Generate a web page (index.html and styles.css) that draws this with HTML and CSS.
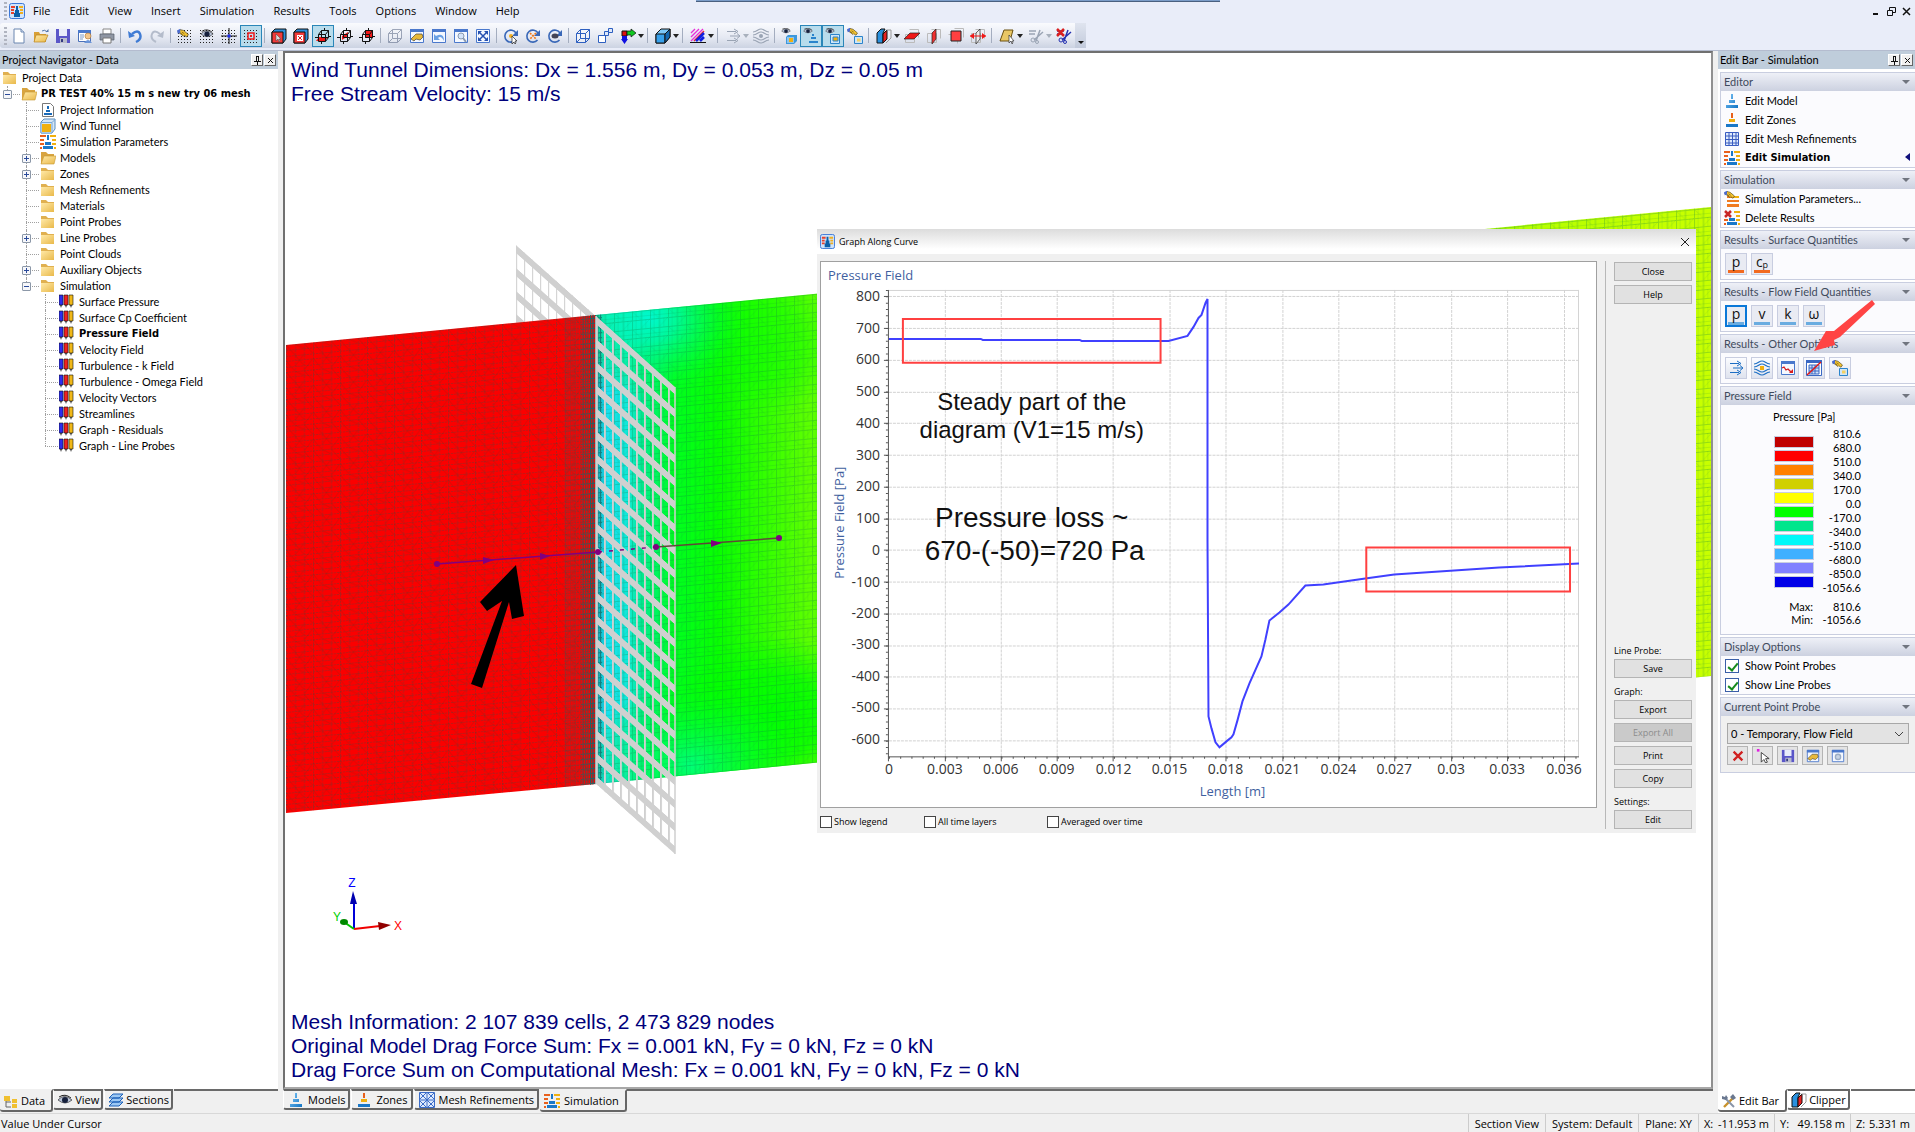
FILE: index.html
```html
<!DOCTYPE html>
<html lang="en">
<head>
<meta charset="utf-8">
<title>Wind Simulation</title>
<link rel="stylesheet" href="styles.css">
</head>
<body>
<svg class="defs" aria-hidden="true">
  <defs>
    <linearGradient id="gFold" x1="0" y1="0" x2="1" y2="1"><stop offset="0" stop-color="#ffe9a8"/><stop offset="1" stop-color="#e9b94a"/></linearGradient>
    <linearGradient id="gBlue" x1="0" y1="0" x2="1" y2="1"><stop offset="0" stop-color="#7cc4f5"/><stop offset="1" stop-color="#1274c4"/></linearGradient>
  </defs>
  <symbol id="app" viewBox="0 0 16 16"><rect x=".5" y=".5" width="15" height="15" rx="2" fill="#cfe3fb" stroke="#3b78d8"/><path d="M2 3h4v2H2zm0 3h3v2H2zm0 3h3v2H2z" fill="#e8402a"/><path d="M10 3h4v2h-4zm1 3h3v2h-3zm0 3h3v2h-3z" fill="#f0b020"/><path d="M7 3h2v4h1v3h1v4H5v-4h1V7h1z" fill="#0a5ea8"/></symbol>
  <symbol id="new" viewBox="0 0 16 16"><path d="M3 1h7l3 3v11H3z" fill="#fff" stroke="#6a86b0"/><path d="M10 1v3h3" fill="#dce6f5" stroke="#6a86b0"/></symbol>
  <symbol id="open" viewBox="0 0 16 16"><path d="M1 4h5l1 2h6v8H1z" fill="#d9a036"/><path d="M3 7h12l-3 7H1z" fill="url(#gFold)" stroke="#b98420" stroke-width=".7"/><path d="M9 3q3-2 5 1" fill="none" stroke="#5577aa"/><path d="M12.500 4h3v-3z" fill="#5577aa"/></symbol>
  <symbol id="save" viewBox="0 0 16 16"><path d="M1 1h14v14H1z" fill="#5a56c8"/><path d="M4 1h8v7H4z" fill="#e8ecfa"/><path d="M5 10h7v5H5z" fill="#b9bccc"/><path d="M6 11h2v3H6z" fill="#333a80"/></symbol>
  <symbol id="props" viewBox="0 0 16 16"><path d="M1.500 2.500h12v11h-12z" fill="#fff" stroke="#4a70b8"/><path d="M1 2h13v3H1z" fill="#4a78cc"/><path d="M3 7h4M3 9h4M3 11h3" stroke="#7a9ac8"/><circle cx="11" cy="8" r="3" fill="#f3c78c" stroke="#a86b2c" stroke-width=".6"/><path d="M7 15q4-6 8 0z" fill="#6a94d8"/></symbol>
  <symbol id="print" viewBox="0 0 16 16"><path d="M4 1h8v5H4z" fill="#fff" stroke="#888"/><path d="M1 6h14v6H1z" fill="#8f96a3" stroke="#555c68" stroke-width=".7"/><path d="M4 10h8v5H4z" fill="#fff" stroke="#777"/></symbol>
  <symbol id="undo" viewBox="0 0 16 16"><path d="M5 6q6-5 8 0t-4 8" fill="none" stroke="#3f7bd4" stroke-width="2.400"/><path d="M1 3l1 7 6-2z" fill="#3f7bd4"/></symbol>
  <symbol id="redo" viewBox="0 0 16 16"><path d="M11 6q-6-5-8 0t4 8" fill="none" stroke="#b4bccb" stroke-width="2"/><path d="M15 3l-1 7-6-2z" fill="#b4bccb"/></symbol>
  <symbol id="dots" viewBox="0 0 16 16"><path d="M1 2.500h15M1 5.500h15M1 8.500h15M1 11.500h15M1 14.500h15" stroke="#222" stroke-dasharray="1 2"/></symbol>
  <symbol id="hand" viewBox="0 0 16 16"><path d="M1 5l3-3 4 1 6 5-2 3-3-2-1 1-4-3z" fill="#f2c230" stroke="#473a10" stroke-width=".8"/><path d="M4 6l3 2M6 5l3 2" stroke="#473a10" stroke-width=".7"/><path d="M0 3l4-2v5l-3 1z" fill="#4a6bd0"/></symbol>
  <symbol id="eye" viewBox="0 0 16 16"><path d="M1 8q6-7 14 0q-7 6-14 0z" fill="#b9c4d8" stroke="#333" stroke-width=".7"/><circle cx="8" cy="8" r="3" fill="#16203c"/><path d="M2 5q6-4 12 1" fill="none" stroke="#222"/></symbol>
  <symbol id="gridhand" viewBox="0 0 16 16"><use href="#dots"/><use href="#hand" width="13" height="13"/></symbol>
  <symbol id="grideye" viewBox="0 0 16 16"><use href="#dots"/><use href="#eye" x="1" y="-1" width="14" height="14"/></symbol>
  <symbol id="gridcross" viewBox="0 0 16 16"><use href="#dots"/><path d="M8 0v16M0 8h16" stroke="#111"/><path d="M6.500 6.500h3v3h-3z" fill="#1a2cf0"/></symbol>
  <symbol id="gridsq" viewBox="0 0 16 16"><use href="#dots"/><path d="M5 5h6v6H5z" fill="#bfe0f0" stroke="#f01818" stroke-width="1.500"/><path d="M7 7h2v2H7z" fill="#f01818"/></symbol>
  <symbol id="cubesel" viewBox="0 0 16 16"><path d="M1 4l3-3h11v10l-3 4H1z" fill="#2a90dd" stroke="#111"/><path d="M1 4h11v11H1z" fill="#f23a3a" stroke="#111"/><path d="M5 6v7l2-2 1 3 1-1-1-2h2z" fill="#ddd" stroke="#444" stroke-width=".5"/></symbol>
  <symbol id="cubex" viewBox="0 0 16 16"><path d="M1 4l3-3h11v10l-3 4H1z" fill="#2a90dd" stroke="#111"/><path d="M1 4h11v11H1z" fill="#f23a3a" stroke="#111"/><path d="M4 7h6v6H4z" fill="#fff"/><path d="M5 8l4 4M9 8l-4 4" stroke="#d22"/></symbol>
  <symbol id="cubew" viewBox="0 0 16 16"><path d="M3.500 6.500h7v7h-7zM6.500 2.500h7v7h-7zM3.500 6.500l3-4M10.500 6.500l3-4M10.500 13.500l3-4M0 9.500h4M13 8.500h3M9.500 0v3M6.500 13v3" fill="none" stroke="#111"/></symbol>
  <symbol id="cubea" viewBox="0 0 16 16"><path d="M1 13l3-4h9l-3 4z" fill="#f01818"/><use href="#cubew"/></symbol>
  <symbol id="cubeb" viewBox="0 0 16 16"><path d="M5 8l6-4v4l-6 4z" fill="#f01818"/><use href="#cubew"/></symbol>
  <symbol id="cubec" viewBox="0 0 16 16"><path d="M6 2h8v8H6z" fill="#f01818"/><use href="#cubew"/></symbol>
  <symbol id="wire" viewBox="0 0 16 16"><path d="M1.500 5.500h9v9h-9zM5.500 1.500h9v9h-9zM1.500 5.500l4-4M10.500 5.500l4-4M10.500 14.500l4-4M1.500 14.500l4-4" fill="#fff" fill-opacity=".4" stroke="#2d5fc0"/></symbol>
  <symbol id="win" viewBox="0 0 16 16"><path d="M1.500 1.500h13v13h-13z" fill="#f4f8ff" stroke="#4a78cc"/><path d="M1 1h14v3H1z" fill="#4a78cc"/></symbol>
  <symbol id="winhand" viewBox="0 0 16 16"><use href="#win"/><path d="M2 11l5-5h6l1 3-3 3-4-1-2 2z" fill="#e8b93a" stroke="#4a4430" stroke-width=".7"/></symbol>
  <symbol id="winundo" viewBox="0 0 16 16"><use href="#win"/><path d="M3 6v6h6L7 10q3-3 6 3 0-9-8-5z" fill="#6aa0e4"/></symbol>
  <symbol id="winzoom" viewBox="0 0 16 16"><use href="#win"/><circle cx="8" cy="8" r="3" fill="#d5e5fa" stroke="#8a9ab0"/><path d="M10 10l3 4" stroke="#8a9ab0" stroke-width="2"/></symbol>
  <symbol id="winfit" viewBox="0 0 16 16"><path d="M1.500 1.500h13v13h-13z" fill="#f4f8ff" stroke="#4a78cc"/><path d="M4 4l8 8M12 4l-8 8" stroke="#2550b0" stroke-width="1.500"/><path d="M3 3h4L3 7zM13 3v4L9 3zM3 13V9l4 4zM13 13H9l4-4z" fill="#2550b0"/></symbol>
  <symbol id="winred" viewBox="0 0 16 16"><use href="#win"/><path d="M2 8l2-1 2 3 2-1 3 3" fill="none" stroke="#d81c1c" stroke-width="1.300"/><path d="M13 13v-4l-4 4z" fill="#d81c1c"/></symbol>
  <symbol id="wingrid" viewBox="0 0 16 16"><path d="M.500.500h15v15H.500z" fill="#fff" stroke="#3a68c4"/><path d="M0 0h16v3H0z" fill="#3a68c4"/><path d="M3 5h10v9H3zM6 5v9M9 5v9M3 8h10M3 11h10" fill="#cfe0f8" stroke="#3a68c4"/><path d="M1 15L15 2" stroke="#e01818" stroke-width="1.500"/></symbol>
  <symbol id="wingear" viewBox="0 0 16 16"><use href="#win"/><circle cx="8" cy="9" r="3" fill="#c8d4e4" stroke="#9aacc4" stroke-width="1.500"/></symbol>
  <symbol id="rot" viewBox="0 0 16 16"><path d="M12.500 12A6 6 0 1 1 13 5" fill="none" stroke="#3a68b8" stroke-width="1.600"/><path d="M15 2v6H9z" fill="#3a68b8"/></symbol>
  <symbol id="rotsel" viewBox="0 0 16 16"><use href="#rot"/><circle cx="8" cy="8" r="2" fill="#f4b020"/><path d="M9 8v8l2-2 1 2 1-1-1-2h2z" fill="#fff" stroke="#222" stroke-width=".7"/></symbol>
  <symbol id="rotx" viewBox="0 0 16 16"><use href="#rot"/><path d="M5 5l6 6M11 5l-6 6" stroke="#f07818" stroke-width="1.600" stroke-dasharray="2 1"/></symbol>
  <symbol id="roteye" viewBox="0 0 16 16"><use href="#rot"/><ellipse cx="8" cy="8" rx="3.500" ry="2.500" fill="#445"/></symbol>
  <symbol id="multi" viewBox="0 0 16 16"><path d="M1.500 7.500h7v7h-7z" fill="#fff" stroke="#2d5fc0"/><path d="M7.500 3.500h4v4h-4zM11.500.500h4v4h-4z" fill="#dfe9fa" stroke="#2d5fc0"/></symbol>
  <symbol id="rgb" viewBox="0 0 16 16"><path d="M2 3h5v5H2z" fill="#e01010" stroke="#111"/><path d="M7 3h4V1l5 4-5 4V7H7z" fill="#10c820" stroke="#111" stroke-width=".7"/><path d="M2 8h5v3h1l-3.500 5L1 11h1z" fill="#1010e0"/></symbol>
  <symbol id="cube" viewBox="0 0 16 16"><path d="M1 6l5-5h9v8l-5 6H1z" fill="#7cc8f8" stroke="#111"/><path d="M1 6h9v9H1z" fill="#38a0ea" stroke="#111"/><path d="M10 6l5-5v8l-5 6z" fill="#1468b0" stroke="#111"/></symbol>
  <symbol id="hatch" viewBox="0 0 16 16"><path d="M1 5l4-4M1 9l8-8M1 13L13 1" stroke="#e830d8" stroke-width="1.300"/><path d="M4 13L14 3" stroke="#f02030" stroke-width="1.500"/><path d="M6 13l8-8M10 13l4-4" stroke="#1020e0" stroke-width="2.500"/><path d="M0 14.500h16" stroke="#111"/></symbol>
  <symbol id="arrows" viewBox="0 0 16 16"><path d="M2 3.500h9M5 8h9M2 12.500h9" stroke="currentColor" stroke-width="1.200"/><path d="M9 1l4 2.500L9 6M12 5.500L15 8l-3 2.500M9 10l4 2.500L9 15" fill="none" stroke="currentColor"/></symbol>
  <symbol id="stream" viewBox="0 0 16 16"><path d="M0 4C4 4 5 1 8 1s4 3 8 3M0 7C4 7 5 4 8 4s4 3 8 3M0 9c4 0 5 3 8 3s4-3 8-3M0 12c4 0 5 3 8 3s4-3 8-3" fill="none" stroke="currentColor" stroke-width="1.200"/><circle cx="8" cy="8" r="2" fill="currentColor"/></symbol>
  <symbol id="streamc" viewBox="0 0 16 16"><use href="#stream"/><path d="M6 6h4v4H6z" fill="#f0b010"/></symbol>
  <symbol id="eyesq" viewBox="0 0 16 16"><use href="#eye" width="10" height="10" x="0" y="-2"/><path d="M5 9l2-2h9v6l-3 3H5z" fill="#3c98dc"/><path d="M6 9h7v6H6z" fill="#8fc4ee"/><path d="M8 10h4v4H8z" fill="#f0b010"/></symbol>
  <symbol id="eyetow" viewBox="0 0 16 16"><use href="#eye" width="10" height="10" x="0" y="-2"/><path d="M9 6h2v2H9zM8 9h5v2H8zM6 13h9v2H6z" fill="#2a84cc"/></symbol>
  <symbol id="eyebox" viewBox="0 0 16 16"><use href="#eye" width="10" height="10" x="0" y="-2"/><path d="M5.500 6.500h9v9h-9z" fill="#cfe6f7" stroke="#2a84cc"/><path d="M8 9h5v4H8z" fill="#f0b010" stroke="#2a84cc"/></symbol>
  <symbol id="handbox" viewBox="0 0 16 16"><use href="#hand" width="12" height="12" y="-1"/><path d="M7.500 8.500h8v7h-8z" fill="#cfe6f7" stroke="#2a84cc"/><path d="M10 10.500h3.500v3H10z" fill="#f4d060"/></symbol>
  <symbol id="clip" viewBox="0 0 16 16"><path d="M1 5l4-4h4L7 5v10H1z" fill="#2a90dd" stroke="#111"/><path d="M7 6l4-4v9l-4 4z" fill="#e82020" stroke="#111"/><path d="M10.500 2h4.500v8l-5 5" fill="none" stroke="#999"/></symbol>
  <symbol id="plane1" viewBox="0 0 16 16"><path d="M1.500 6.500h9v8h-9zM5.500 1.500h9v8" fill="none" stroke="#bbb"/><path d="M0 11l6-6h10l-6 6z" fill="#f01818" stroke="#222" stroke-width=".7"/></symbol>
  <symbol id="plane2" viewBox="0 0 16 16"><path d="M1.500 5.500h9v9h-9zM5.500 1.500h9v9" fill="none" stroke="#bbb"/><path d="M6 5l4-4v10l-4 5z" fill="#f03030" stroke="#222" stroke-width=".7"/></symbol>
  <symbol id="plane3" viewBox="0 0 16 16"><path d="M.500 6.500h9v9M6.500.500h9v9" fill="none" stroke="#bbb"/><path d="M3 3h10v10H3z" fill="#ff4040" stroke="#222"/></symbol>
  <symbol id="plane4" viewBox="0 0 16 16"><path d="M1.500 5.500h9v9h-9zM5.500 1.500h9v9" fill="none" stroke="#bbb"/><path d="M6 5l4-4v10l-4 5z" fill="#eee" stroke="#222" stroke-width=".7"/><path d="M0 8h16" stroke="#f01818"/><path d="M0 8l4-3v6zM16 8l-4-3v6z" fill="#f01818"/></symbol>
  <symbol id="slab" viewBox="0 0 16 16"><path d="M1 13L5 2h9l-3 11z" fill="#e9c765" stroke="#6a5010"/><path d="M10 7v8l2-2 1 3 1-1-1-2h2z" fill="#fff" stroke="#333" stroke-width=".7"/></symbol>
  <symbol id="cut" viewBox="0 0 16 16"><path d="M1 3h7M1 6h6" stroke="currentColor" stroke-width="1.500"/><path d="M15 4L6 12M12 2l-4 11" stroke="currentColor" stroke-width="1.500"/><circle cx="5" cy="12" r="2" fill="none" stroke="currentColor"/><circle cx="9" cy="14" r="1.500" fill="none" stroke="currentColor"/></symbol>
  <symbol id="cutx" viewBox="0 0 16 16"><g color="#2430b0"><use href="#cut"/></g><path d="M1 1l7 7M8 1L1 8" stroke="#d82020" stroke-width="2.500"/></symbol>
  <symbol id="folder" viewBox="0 0 16 16"><path d="M1 2h5l2 2h6v10H1z" fill="#e0b050"/><path d="M1 5h13v9H1z" fill="url(#gFold)"/></symbol>
  <symbol id="folderop" viewBox="0 0 16 16"><path d="M1 2h5l2 2h6v10H1z" fill="#d8a440"/><path d="M4 6h12l-2 8H1z" fill="url(#gFold)" stroke="#c89830" stroke-width=".6"/></symbol>
  <symbol id="info" viewBox="0 0 16 16"><path d="M2.500 1.500h8l3 3v10h-11z" fill="#fff" stroke="#777"/><path d="M7 4h2v3H7zM6 8h4v2H6zM4 11h8v2H4z" fill="#1a6ab8"/></symbol>
  <symbol id="tunnel" viewBox="0 0 16 16"><path d="M1 4l3-3h11v10l-3 4H1z" fill="#d5e7f7" stroke="#5a8ec0"/><path d="M1 4.500h11V15H1zM12 4.500l3-3" fill="#d5e7f7" stroke="#7aa8d4"/><path d="M2 6h9v8H2z" fill="#f0b010"/></symbol>
  <symbol id="sim" viewBox="0 0 16 16"><path d="M0 1h6v2H0zM0 5h4v2H0zM0 9h4v2H0zM0 13h2v2H0z" fill="#e8601c"/><path d="M10 1h6v2h-6zM12 5h4v2h-4zM12 9h4v2h-4zM14 13h2v2h-2z" fill="#f0b010"/><path d="M7 1h2v5H7zM5 8h6v3H5zM3 12h10v3H3z" fill="#1a78c8"/></symbol>
  <symbol id="pens" viewBox="0 0 16 16"><path d="M0 1h4v10H0z" fill="#2c2cf0" stroke="#111" stroke-width=".6"/><path d="M5 1h4v10H5z" fill="#f02020" stroke="#111" stroke-width=".6"/><path d="M10 1h4v10h-4z" fill="#f0b818" stroke="#111" stroke-width=".6"/><path d="M1 11h2l-1 3zM6 11h2l-1 3zM11 11h2l-1 3z" fill="#333"/></symbol>
  <symbol id="tower" viewBox="0 0 16 16"><path d="M7 1h2v5H7zM5 7h6v3H5zM2 12h12v3H2z" fill="url(#gBlue)"/></symbol>
  <symbol id="towerz" viewBox="0 0 16 16"><path d="M7 1h2v5H7z" fill="#e8601c"/><path d="M5 7h6v3H5z" fill="#f0b010"/><path d="M2 12h12v3H2z" fill="#1a78c8"/></symbol>
  <symbol id="mesh" viewBox="0 0 16 16"><path d="M1.500 1.500h13v13h-13zM5 1v14M8.500 1v14M12 1v14M1 5h14M1 8.500h14M1 12h14" fill="#dfeafc" stroke="#3a5cc0"/></symbol>
  <symbol id="meshx" viewBox="0 0 16 16"><path d="M.500.500h15v15H.500zM8 0v16M0 8h16M1 1l14 14M15 1L1 15M8 0l8 8-8 8-8-8z" fill="#dfeafc" stroke="#3a6cc8"/></symbol>
  <symbol id="simhand" viewBox="0 0 16 16"><path d="M3 5h12v2H3zM3 9h12v2H3zM3 13h12v3H3z" fill="#f07a20"/><path d="M9 5h6v2H9z" fill="#f0b010"/><use href="#hand" width="12" height="12" y="-1"/></symbol>
  <symbol id="simx" viewBox="0 0 16 16"><use href="#sim"/><path d="M0 0h9v8H0z" fill="#fbfbfd"/><path d="M1 1l6 6M7 1L1 7" stroke="#c82828" stroke-width="2.500"/></symbol>
  <symbol id="redx" viewBox="0 0 16 16"><path d="M3 3l10 10M13 3L3 13" stroke="#d02020" stroke-width="2.600"/></symbol>
  <symbol id="pick" viewBox="0 0 16 16"><path d="M6 4v11l3-3 2 4 2-1-2-4h4z" fill="#fff" stroke="#333"/><path d="M1 0h3v3H1z" fill="#e020e0"/></symbol>
  <symbol id="tree" viewBox="0 0 16 16"><path d="M1 3h6v5H1zM9 6h5v4H9zM9 11h5v4H9z" fill="#f0c030"/><path d="M3 8v6h5M3 9h5" fill="none" stroke="#666"/></symbol>
  <symbol id="layers" viewBox="0 0 16 16"><path d="M1 14l4-4h10l-4 4zM1 10l4-4h10l-4 4zM1 6l4-4h10l-4 4z" fill="#9cc8f4" stroke="#1c60b8"/></symbol>
  <symbol id="tools" viewBox="0 0 16 16"><path d="M3 14L12 5" stroke="#c8922c" stroke-width="2.400"/><path d="M13 14L4 5" stroke="#8894a8" stroke-width="2"/><path d="M9 4l3-3 3 4-3 2zM1 3l3 1 1-2 2 3-2 2-4-1z" fill="#6a7890"/></symbol>
</svg>

<header class="menubar">
  <span class="grip"></span>
  <svg class="ic"><use href="#app"/></svg>
  <nav class="menus">
    <button>File</button><button>Edit</button><button>View</button><button>Insert</button><button>Simulation</button><button>Results</button><button>Tools</button><button>Options</button><button>Window</button><button>Help</button>
  </nav>
  <span class="topline"></span>
  <div class="winbtns">
    <button aria-label="Minimize"><svg viewBox="0 0 9 9"><path d="M1 7h5" stroke="#111" stroke-width="2"/></svg></button>
    <button aria-label="Restore"><svg viewBox="0 0 9 9"><path d="M2.500 3V.500h6v5H6M.500 3.500h5v5h-5z" fill="none" stroke="#111"/></svg></button>
    <button aria-label="Close"><svg viewBox="0 0 9 9"><path d="M1 1l7 7M8 1L1 8" stroke="#111" stroke-width="1.500"/></svg></button>
  </div>
</header>

<div class="toolrow">
<div class="toolbar">
  <span class="grip"></span>
  <button aria-label="New"><svg class="ic"><use href="#new"/></svg></button>
  <button aria-label="Open"><svg class="ic"><use href="#open"/></svg></button>
  <button aria-label="Save"><svg class="ic"><use href="#save"/></svg></button>
  <button aria-label="Properties"><svg class="ic"><use href="#props"/></svg></button>
  <button aria-label="Print"><svg class="ic"><use href="#print"/></svg></button>
  <i></i>
  <button aria-label="Undo"><svg class="ic"><use href="#undo"/></svg></button>
  <button aria-label="Redo"><svg class="ic"><use href="#redo"/></svg></button>
  <i></i>
  <button aria-label="Grid settings"><svg class="ic"><use href="#gridhand"/></svg></button>
  <button aria-label="Show grid"><svg class="ic"><use href="#grideye"/></svg></button>
  <button aria-label="Grid origin"><svg class="ic"><use href="#gridcross"/></svg></button>
  <button aria-label="Snap" class="on"><svg class="ic"><use href="#gridsq"/></svg></button>
  <i></i>
  <button aria-label="Select"><svg class="ic"><use href="#cubesel"/></svg></button>
  <button aria-label="Deselect"><svg class="ic"><use href="#cubex"/></svg></button>
  <button aria-label="Plane XY" class="on"><svg class="ic"><use href="#cubea"/></svg></button>
  <button aria-label="Plane YZ"><svg class="ic"><use href="#cubeb"/></svg></button>
  <button aria-label="Plane XZ"><svg class="ic"><use href="#cubec"/></svg></button>
  <i></i>
  <button aria-label="Wireframe" class="dim"><svg class="ic"><use href="#wire"/></svg></button>
  <button aria-label="View settings"><svg class="ic"><use href="#winhand"/></svg></button>
  <button aria-label="Previous view"><svg class="ic"><use href="#winundo"/></svg></button>
  <button aria-label="Zoom window"><svg class="ic"><use href="#winzoom"/></svg></button>
  <button aria-label="Fit"><svg class="ic"><use href="#winfit"/></svg></button>
  <i></i>
  <button aria-label="Rotate selection"><svg class="ic"><use href="#rotsel"/></svg></button>
  <button aria-label="Rotate point"><svg class="ic"><use href="#rotx"/></svg></button>
  <button aria-label="Rotate view"><svg class="ic"><use href="#roteye"/></svg></button>
  <i></i>
  <button aria-label="Isometric"><svg class="ic"><use href="#wire"/></svg></button>
  <button aria-label="Perspective"><svg class="ic"><use href="#multi"/></svg></button>
  <button aria-label="Direction" class="dd"><svg class="ic"><use href="#rgb"/></svg></button>
  <i></i>
  <button aria-label="Render mode" class="dd"><svg class="ic"><use href="#cube"/></svg></button>
  <i></i>
  <button aria-label="Lines" class="dd"><svg class="ic"><use href="#hatch"/></svg></button>
  <i></i>
  <button aria-label="Vectors" class="dd off" disabled><svg class="ic"><use href="#arrows"/></svg></button>
  <button aria-label="Streamlines" class="off" disabled><svg class="ic"><use href="#stream"/></svg></button>
  <i></i>
  <button aria-label="Show tunnel"><svg class="ic"><use href="#eyesq"/></svg></button>
  <button aria-label="Show models" class="on"><svg class="ic"><use href="#eyetow"/></svg></button>
  <button aria-label="Show zones" class="on"><svg class="ic"><use href="#eyebox"/></svg></button>
  <button aria-label="Display settings"><svg class="ic"><use href="#handbox"/></svg></button>
  <i></i>
  <button aria-label="Clipper" class="dd"><svg class="ic"><use href="#clip"/></svg></button>
  <button aria-label="Clip Z"><svg class="ic"><use href="#plane1"/></svg></button>
  <button aria-label="Clip X"><svg class="ic"><use href="#plane2"/></svg></button>
  <button aria-label="Clip Y"><svg class="ic"><use href="#plane3"/></svg></button>
  <button aria-label="Flip clip"><svg class="ic"><use href="#plane4"/></svg></button>
  <i></i>
  <button aria-label="Slab" class="dd"><svg class="ic"><use href="#slab"/></svg></button>
  <button aria-label="Cut" class="dd off" disabled><svg class="ic"><use href="#cut"/></svg></button>
  <button aria-label="Delete cut"><svg class="ic"><use href="#cutx"/></svg></button>
  <span class="more"></span>
</div>
</div>

<main>
  <section class="nav">
    <div class="phead"><h2>Project Navigator - Data</h2><button class="pb" aria-label="Pin"><svg viewBox="0 0 9 9"><path d="M3.500 0v5M5.500 0v5M1 5.500h7M4.500 6v3M3 .500h3" stroke="#111" fill="none"/></svg></button><button class="pb" aria-label="Close"><svg viewBox="0 0 9 9"><path d="M2 2l5 5M7 2L2 7" stroke="#111"/></svg></button></div>
    <div class="tree">
      <div class="row root"><svg class="ic"><use href="#folder"/></svg>Project Data</div>
      <ul>
        <li><div class="row"><button class="ex" aria-label="Collapse"></button><svg class="ic"><use href="#folderop"/></svg><b>PR TEST 40% 15 m s new try 06 mesh</b></div>
        <ul>
          <li><div class="row"><svg class="ic"><use href="#info"/></svg>Project Information</div></li>
          <li><div class="row"><svg class="ic"><use href="#tunnel"/></svg>Wind Tunnel</div></li>
          <li><div class="row"><svg class="ic"><use href="#sim"/></svg>Simulation Parameters</div></li>
          <li><div class="row"><button class="ex plus" aria-label="Expand"></button><svg class="ic"><use href="#folderop"/></svg>Models</div></li>
          <li><div class="row"><button class="ex plus" aria-label="Expand"></button><svg class="ic"><use href="#folder"/></svg>Zones</div></li>
          <li><div class="row"><svg class="ic"><use href="#folder"/></svg>Mesh Refinements</div></li>
          <li><div class="row"><svg class="ic"><use href="#folder"/></svg>Materials</div></li>
          <li><div class="row"><svg class="ic"><use href="#folder"/></svg>Point Probes</div></li>
          <li><div class="row"><button class="ex plus" aria-label="Expand"></button><svg class="ic"><use href="#folder"/></svg>Line Probes</div></li>
          <li><div class="row"><svg class="ic"><use href="#folder"/></svg>Point Clouds</div></li>
          <li><div class="row"><button class="ex plus" aria-label="Expand"></button><svg class="ic"><use href="#folder"/></svg>Auxiliary Objects</div></li>
          <li><div class="row"><button class="ex" aria-label="Collapse"></button><svg class="ic"><use href="#folder"/></svg>Simulation</div>
          <ul>
            <li><div class="row"><svg class="ic"><use href="#pens"/></svg>Surface Pressure</div></li>
            <li><div class="row"><svg class="ic"><use href="#pens"/></svg>Surface Cp Coefficient</div></li>
            <li><div class="row"><svg class="ic"><use href="#pens"/></svg><b>Pressure Field</b></div></li>
            <li><div class="row"><svg class="ic"><use href="#pens"/></svg>Velocity Field</div></li>
            <li><div class="row"><svg class="ic"><use href="#pens"/></svg>Turbulence - k Field</div></li>
            <li><div class="row"><svg class="ic"><use href="#pens"/></svg>Turbulence - Omega Field</div></li>
            <li><div class="row"><svg class="ic"><use href="#pens"/></svg>Velocity Vectors</div></li>
            <li><div class="row"><svg class="ic"><use href="#pens"/></svg>Streamlines</div></li>
            <li><div class="row"><svg class="ic"><use href="#pens"/></svg>Graph - Residuals</div></li>
            <li><div class="row"><svg class="ic"><use href="#pens"/></svg>Graph - Line Probes</div></li>
          </ul></li>
        </ul></li>
      </ul>
    </div>
    <div class="tabs">
      <button class="sel"><svg class="ic"><use href="#tree"/></svg>Data</button><button><svg class="ic"><use href="#eye"/></svg>View</button><button><svg class="ic"><use href="#layers"/></svg>Sections</button><span></span>
    </div>
  </section>

  <section class="center">
    <div class="view">
      <svg class="scene" width="1426" height="1034" viewBox="285 53 1426 1034" role="img" aria-label="Pressure field around a perforated plate">
        <defs>
          <pattern id="mred" width="27" height="27" patternUnits="userSpaceOnUse" patternTransform="translate(286 345) skewY(-5.5)"><path d="M.500 0v27M9.500 0v27M18.500 0v27M0 .500h27M0 5.500h27M0 11.500h27M0 16.500h27M0 22.500h27" stroke="#205850" stroke-opacity=".33" stroke-dasharray="2 1" fill="none"/><path d="M0 0l9 11M9 11l9 11M18 0l9 11M0 16l9 11M18 11l-9 11M27 16l-9 11M9 0l9 5" stroke="#5a3018" stroke-opacity=".3" stroke-width=".8"/></pattern>
          <pattern id="mgreen" width="18" height="18" patternUnits="userSpaceOnUse" patternTransform="translate(596 315) skewY(-5.5)"><path d="M.500 0v18M9.500 0v18M0 .500h18M0 9.500h18" stroke="#0a8040" stroke-opacity=".28"/><path d="M0 5.500h18M0 0l9 9M18 9l-9 9M4 0v18M14 9v9" stroke="#0a8040" stroke-opacity=".16" stroke-width=".8"/></pattern>
          <pattern id="mdense" width="5" height="5" patternUnits="userSpaceOnUse" patternTransform="skewY(-5.5)"><path d="M.500 0v5M3 0v5M0 .500h5" stroke="#146868" stroke-opacity=".75"/></pattern>
          <pattern id="plate" width="8" height="23" patternUnits="userSpaceOnUse" patternTransform="translate(516 245) skewY(41.700)"><path d="M0 0h8v8H0zM0 0h1v23H0z" fill="#d0d0d0"/></pattern>
          <pattern id="platef" width="8" height="23" patternUnits="userSpaceOnUse" patternTransform="translate(596 316) skewY(41.700)"><path d="M0 0h8v8H0zM0 0h2v23H0z" fill="#d0d0d0"/></pattern>
          <linearGradient id="flow" gradientUnits="userSpaceOnUse" x1="596" y1="0" x2="1711" y2="0"><stop offset="0" stop-color="#10a8b8"/><stop offset=".010" stop-color="#18e0f0"/><stop offset=".028" stop-color="#10e8d8"/><stop offset=".045" stop-color="#00f080"/><stop offset=".070" stop-color="#00ff20"/><stop offset=".110" stop-color="#08ff00"/><stop offset=".190" stop-color="#5cff00"/><stop offset=".950" stop-color="#c4ff00"/><stop offset="1" stop-color="#c8ff00"/></linearGradient>
          <radialGradient id="b1"><stop offset="0" stop-color="#00f8d0"/><stop offset=".300" stop-color="#00f8b0" stop-opacity=".8"/><stop offset="1" stop-color="#00ff20" stop-opacity="0"/></radialGradient>
          <radialGradient id="b2"><stop offset="0" stop-color="#00ff78"/><stop offset="1" stop-color="#00ff20" stop-opacity="0"/></radialGradient>
          <radialGradient id="b3"><stop offset="0" stop-color="#00ff00"/><stop offset=".500" stop-color="#00ff00" stop-opacity=".8"/><stop offset="1" stop-color="#00ff00" stop-opacity="0"/></radialGradient>
          <clipPath id="gclip"><path d="M596 315L1711 207V676L596 784z"/></clipPath>
        </defs>
        <path d="M516 245L596 316V315L516 323z" fill="url(#plate)"/>
        <path d="M286 345L596 315V784L286 813z" fill="#fb0000"/>
        <path d="M286 345L596 315V784L286 813z" fill="url(#mred)"/>
        <path d="M564 318L596 315V784L564 787z" fill="url(#mdense)" opacity=".35"/>
        <path d="M581 316L596 315V784L581 785z" fill="url(#mdense)" opacity=".7"/>
        <path d="M590 315L596 315V784L590 785z" fill="url(#mdense)"/>
        <g clip-path="url(#gclip)">
          <path d="M596 200h1115v600H596z" fill="url(#flow)"/>
          <ellipse cx="770" cy="345" rx="70" ry="70" fill="url(#b3)" opacity=".5"/>
          <ellipse cx="770" cy="715" rx="110" ry="80" fill="url(#b3)"/>
          <ellipse cx="648" cy="318" rx="100" ry="80" fill="url(#b1)"/>
          <ellipse cx="690" cy="765" rx="110" ry="80" fill="url(#b2)"/>
          <path d="M596 200h1115v600H596z" fill="url(#mgreen)"/>
          <path d="M596 300h6v500h-6z" fill="url(#mdense)"/>
        </g>
        <path d="M596 316L675 387V854L596 784z" fill="url(#platef)"/>
        <path d="M596 316V784M675 387V854" stroke="#d0d0d0" stroke-width="1.500"/>
        <path d="M437 564L598 552" stroke="#800080" stroke-width="1.500"/>
        <path d="M598 552L656 547" stroke="#800080" stroke-width="1.500" stroke-dasharray="4 7"/>
        <path d="M656 547L780 538" stroke="#604838" stroke-width="1.500"/>
        <g fill="#800080"><circle cx="437" cy="564" r="3"/><circle cx="598" cy="552" r="3"/><circle cx="656" cy="547" r="3"/><circle cx="779" cy="538" r="3"/><path d="M483 557v7l11-4zM540 553v7l10-4zM711 540v7l11-4z"/></g>
        <path d="M516 565L524 616L512 619L509 602L482 688L471 684L502 601L487 611L480 602z" fill="#000"/>
        <path d="M354 929V900" stroke="#0000d8" stroke-width="2"/><path d="M350 904L353 891L357 904z" fill="#0000b0"/>
        <path d="M354 929L380 926" stroke="#f00000" stroke-width="2"/><path d="M378 922L391 925L379 930z" fill="#900000"/>
        <path d="M354 929L344 922" stroke="#00c800" stroke-width="2"/><ellipse cx="344" cy="922" rx="4" ry="3" fill="#008800"/>
        <g font-family="Liberation Sans, sans-serif" font-size="12" text-anchor="middle"><text x="352" y="887" fill="#0000ff">Z</text><text x="398" y="930" fill="#ff0000">X</text><text x="337" y="921" fill="#00d000">Y</text></g>
      </svg>
      <div class="overlay"><p>Wind Tunnel Dimensions: Dx = 1.556 m, Dy = 0.053 m, Dz = 0.05 m<br>Free Stream Velocity: 15 m/s</p>
      <p>Mesh Information: 2 107 839 cells, 2 473 829 nodes<br>Original Model Drag Force Sum: Fx = 0.001 kN, Fy = 0 kN, Fz = 0 kN<br>Drag Force Sum on Computational Mesh: Fx = 0.001 kN, Fy = 0 kN, Fz = 0 kN</p></div>

      <div class="dialog" role="dialog" aria-label="Graph Along Curve">
        <div class="dtitle"><svg class="ic"><use href="#app"/></svg><span>Graph Along Curve</span><button aria-label="Close"><svg viewBox="0 0 10 10"><path d="M1 1l8 8M9 1L1 9" stroke="#222"/></svg></button></div>
        <div class="dbody">
          <div class="dleft">
            <svg class="plot" viewBox="821 262 776 546" role="img" aria-label="Pressure field along the probe line">
              <path d="M889 290.500H1580M1579.500 290V757" stroke="#d4d4d4" fill="none"/>
              <path d="M889 296.500h691M889 328.500h691M889 360.500h691M889 392.500h691M889 423.500h691M889 455.500h691M889 487.500h691M889 519.500h691M889 550.500h691M889 582.500h691M889 614.500h691M889 646.500h691M889 677.500h691M889 709.500h691M889 741.500h691M945.500 290v467M1001.500 290v467M1057.500 290v467M1113.500 290v467M1170.500 290v467M1226.500 290v467M1283.500 290v467M1339.500 290v467M1395.500 290v467M1452.500 290v467M1508.500 290v467M1565.500 290v467" stroke="#d2d2d2" stroke-dasharray="3 1" fill="none"/>
              <path d="M888.500 290V757.500H1580" stroke="#555" fill="none"/>
              <path d="M887 290V757" stroke="#555" stroke-width="2" stroke-dasharray="1 5.356"/>
              <path d="M889 758.500H1580" stroke="#555" stroke-width="2" stroke-dasharray="1 10.270"/>
              <path d="M884 296.500h5M884 328.500h5M884 360.500h5M884 392.500h5M884 423.500h5M884 455.500h5M884 487.500h5M884 519.500h5M884 550.500h5M884 582.500h5M884 614.500h5M884 646.500h5M884 677.500h5M884 709.500h5M884 741.500h5M888.500 757v5M945.500 757v5M1001.500 757v5M1057.500 757v5M1113.500 757v5M1170.500 757v5M1226.500 757v5M1283.500 757v5M1339.500 757v5M1395.500 757v5M1452.500 757v5M1508.500 757v5M1565.500 757v5" stroke="#555"/>
              <path d="M889 339H981L983 340H1080L1082 341H1169L1188 336L1194 327L1199 318L1202 315L1206 303L1208 299V540L1209 717L1212 729L1216 743L1220 748L1227 742L1232 738L1234 735L1238 721L1243 702L1250 684L1262 657L1266 640L1270 621L1280 613L1289 605L1306 586L1324 585L1366 579L1395 575L1440 572L1500 568L1580 564" fill="none" stroke="#4040ff" stroke-width="2"/>
              <path d="M903 319h258v44H903zM1367 548h204v44h-204z" fill="none" stroke="#ff4040" stroke-width="2"/>
              <g class="ax"><g text-anchor="end"><text x="880" y="301">800</text><text x="880" y="333">700</text><text x="880" y="364">600</text><text x="880" y="396">500</text><text x="880" y="428">400</text><text x="880" y="460">300</text><text x="880" y="491">200</text><text x="880" y="523">100</text><text x="880" y="555">0</text><text x="880" y="587">-100</text><text x="880" y="618">-200</text><text x="880" y="650">-300</text><text x="880" y="682">-400</text><text x="880" y="713">-500</text><text x="880" y="745">-600</text></g>
              <g text-anchor="middle"><text x="889" y="775">0</text><text x="945" y="775">0.003</text><text x="1001" y="775">0.006</text><text x="1057" y="775">0.009</text><text x="1114" y="775">0.012</text><text x="1170" y="775">0.015</text><text x="1226" y="775">0.018</text><text x="1283" y="775">0.021</text><text x="1339" y="775">0.024</text><text x="1395" y="775">0.027</text><text x="1452" y="775">0.03</text><text x="1508" y="775">0.033</text><text x="1565" y="775">0.036</text></g></g>
              <g class="at"><text x="828" y="280">Pressure Field</text><text x="1233" y="797" text-anchor="middle">Length [m]</text><text transform="translate(844 523) rotate(-90)" text-anchor="middle">Pressure Field [Pa]</text></g>
              <g class="note"><text x="1032" y="410">Steady part of the</text><text x="1032" y="438">diagram (V1=15 m/s)</text></g>
              <g class="note big"><text x="1032" y="527">Pressure loss ~</text><text x="1035" y="560">670-(-50)=720 Pa</text></g>
            </svg>
            <div class="checks"><label><input type="checkbox">Show legend</label><label><input type="checkbox">All time layers</label><label><input type="checkbox">Averaged over time</label></div>
          </div>
          <div class="dside">
            <button>Close</button><button>Help</button>
            <span class="first">Line Probe:</span><button>Save</button>
            <span>Graph:</span><button>Export</button><button disabled>Export All</button><button>Print</button><button>Copy</button>
            <span>Settings:</span><button>Edit</button>
          </div>
        </div>
      </div>
    </div>
    <div class="tabs">
      <button><svg class="ic"><use href="#tower"/></svg>Models</button><button><svg class="ic"><use href="#towerz"/></svg>Zones</button><button><svg class="ic"><use href="#meshx"/></svg>Mesh Refinements</button><button class="sel"><svg class="ic"><use href="#sim"/></svg>Simulation</button><span></span>
    </div>
  </section>

  <section class="edit">
    <div class="phead"><h2>Edit Bar - Simulation</h2><button class="pb" aria-label="Pin"><svg viewBox="0 0 9 9"><path d="M3.500 0v5M5.500 0v5M1 5.500h7M4.500 6v3M3 .500h3" stroke="#111" fill="none"/></svg></button><button class="pb" aria-label="Close"><svg viewBox="0 0 9 9"><path d="M2 2l5 5M7 2L2 7" stroke="#111"/></svg></button></div>
    <div class="groups">
      <div class="grp"><h3>Editor</h3><div class="list">
        <button><svg class="ic"><use href="#tower"/></svg>Edit Model</button>
        <button><svg class="ic"><use href="#towerz"/></svg>Edit Zones</button>
        <button><svg class="ic"><use href="#mesh"/></svg>Edit Mesh Refinements</button>
        <button class="cur"><svg class="ic"><use href="#sim"/></svg><b>Edit Simulation</b></button></div></div>
      <div class="grp"><h3>Simulation</h3><div class="list">
        <button><svg class="ic"><use href="#simhand"/></svg>Simulation Parameters...</button>
        <button><svg class="ic"><use href="#simx"/></svg>Delete Results</button></div></div>
      <div class="grp"><h3>Results - Surface Quantities</h3><div class="sq hot"><button>p</button><button>c<sub>p</sub></button></div></div>
      <div class="grp"><h3>Results - Flow Field Quantities</h3><div class="sq cold"><button class="sel">p</button><button>v</button><button>k</button><button>ω</button></div></div>
      <div class="grp other"><h3>Results - Other Options</h3><div class="sq"><button aria-label="Vectors"><svg class="ic"><use href="#arrows"/></svg></button><button aria-label="Streamlines"><svg class="ic"><use href="#streamc"/></svg></button><button aria-label="Residuals"><svg class="ic"><use href="#winred"/></svg></button><button aria-label="Graph along curve"><svg class="ic"><use href="#wingrid"/></svg></button><button aria-label="Display settings"><svg class="ic"><use href="#handbox"/></svg></button></div>
        <svg class="pointer" viewBox="0 0 62 54"><path d="M61 4L58 0L20 31L12 31L0 51L21 45L20 40L26 37z" fill="#ff4444"/></svg></div>
      <div class="grp"><h3>Pressure Field</h3>
        <div class="legend"><p>Pressure [Pa]</p>
          <div class="scale">
            <div class="cols"><i class="c1"></i><i class="c2"></i><i class="c3"></i><i class="c4"></i><i class="c5"></i><i class="c6"></i><i class="c7"></i><i class="c8"></i><i class="c9"></i><i class="c10"></i><i class="c11"></i></div>
            <div class="vals"><span>810.6</span><span>680.0</span><span>510.0</span><span>340.0</span><span>170.0</span><span>0.0</span><span>-170.0</span><span>-340.0</span><span>-510.0</span><span>-680.0</span><span>-850.0</span><span>-1056.6</span></div>
          </div>
          <dl><dt>Max:</dt><dd>810.6</dd><dt>Min:</dt><dd>-1056.6</dd></dl>
        </div></div>
      <div class="grp"><h3>Display Options</h3><div class="list">
        <label><input type="checkbox" checked>Show Point Probes</label>
        <label><input type="checkbox" checked>Show Line Probes</label></div></div>
      <div class="grp grey"><h3>Current Point Probe</h3>
        <div class="probe"><div class="selwrap"><select aria-label="Current point probe"><option>0 - Temporary, Flow Field</option></select><svg viewBox="0 0 10 6"><path d="M1 1l4 4 4-4" fill="none" stroke="#444"/></svg></div>
        <div class="pbtns"><button aria-label="Delete"><svg class="ic"><use href="#redx"/></svg></button><button aria-label="Pick"><svg class="ic"><use href="#pick"/></svg></button><button aria-label="Save"><svg class="ic"><use href="#save"/></svg></button><button aria-label="View"><svg class="ic"><use href="#winhand"/></svg></button><button aria-label="Settings"><svg class="ic"><use href="#wingear"/></svg></button></div></div></div>
    </div>
    <div class="tabs">
      <button class="sel"><svg class="ic"><use href="#tools"/></svg>Edit Bar</button><button><svg class="ic"><use href="#clip"/></svg>Clipper</button><span></span>
    </div>
  </section>
</main>

<footer><span class="msg">Value Under Cursor</span><span>Section View</span><span>System: Default</span><span>Plane: XY</span><span class="co">X:<em>-11.953 m</em></span><span class="co">Y:<em>49.158 m</em></span><span class="co last">Z:<em>5.331 m</em></span></footer>
</body>
</html>
```
FILE: styles.css
```css
* { box-sizing: border-box; }
html, body { margin: 0; height: 100%; }
body { display: flex; flex-direction: column; overflow: hidden; background: #f0f0f0; color: #000; font: 11px/16px Lato, "DejaVu Sans Condensed", sans-serif; }
button, select, input { font: inherit; color: inherit; margin: 0; }
button { border: 0; padding: 0; background: none; }
b { font: bold 11px/16px "DejaVu Sans Condensed", sans-serif; }
.defs { position: absolute; width: 0; height: 0; }
.ic { width: 16px; height: 16px; flex: none; display: block; overflow: visible; }

.menubar { position: relative; height: 23px; flex: none; display: flex; align-items: center; gap: 2px; padding: 0 4px 1px; background: #e9edf9; font: 11px/16px "Open Sans", sans-serif; }
.grip { width: 3px; height: 18px; flex: none; background: repeating-linear-gradient(#b0b4c0 0 2px, transparent 2px 4px); }
.menus { display: flex; gap: 1px; margin-left: -3px; }
.menus button { padding: 0 9px; }
.topline { position: absolute; top: 0; left: 696px; width: 524px; height: 2px; background: #7a9cc8; border-bottom: 1px solid #4a6080; }
.winbtns { margin-left: auto; display: flex; gap: 6px; }
.winbtns svg { width: 9px; height: 9px; display: block; }

.toolrow { height: 28px; flex: none; background: #e9edf9; border-bottom: 1px solid #b4bccf; }
.toolbar { width: max-content; height: 25px; display: flex; align-items: center; padding-left: 4px; background: linear-gradient(#fafbfe, #e4e8f2 60%, #ccd3e2); border-radius: 3px; }
.toolbar .grip { margin-right: 1px; }
.toolbar button { width: 22px; height: 22px; display: flex; align-items: center; justify-content: center; color: #2d6ab8; }
.toolbar i { width: 6px; height: 15px; background: linear-gradient(90deg, transparent 2px, #a4adbf 2px 3px, transparent 3px); }
.toolbar .on { background: #b8dcec; border: 1px solid #2a86b8; }
.toolbar .off { color: #9aa4b4; }
.toolbar .dim { opacity: 0.5; filter: grayscale(0.7); }
.toolbar .dd { width: 29px; padding-left: 2px; gap: 2px; }
.dd::after { content: ""; border: 3px solid transparent; border-top: 4px solid #222; border-bottom: 0; }
.dd.off::after { border-top-color: #a8b0bc; }
.more { width: 11px; height: 25px; background: linear-gradient(#dfe4ef, #c2cadb); display: flex; align-items: flex-end; justify-content: center; }
.more::after { content: ""; border: 3px solid transparent; border-top-color: #111; margin-bottom: 1px; }

main { flex: 1; min-height: 0; display: grid; grid-template-columns: 278px 1fr 197px; gap: 5px; }
.nav, .center, .edit { min-width: 0; min-height: 0; display: flex; flex-direction: column; }
.phead { height: 18px; flex: none; display: flex; align-items: center; gap: 1px; padding: 0 2px; background: #bfcddb; }
.phead h2 { flex: 1; margin: 0; font: 11px/16px Lato, sans-serif; }
.pb { width: 12px; height: 12px; background: #f0f0f0; border: 1px solid; border-color: #fff #666 #666 #fff; display: flex; align-items: center; justify-content: center; }
.pb svg { width: 9px; height: 9px; flex: none; }

.tree { flex: 1; background: #fff; padding-top: 1px; }
.tree ul { list-style: none; margin: 0; padding: 0; }
.tree > ul { margin-left: 7px; }
.tree li ul { margin-left: 19px; }
.row { position: relative; height: 16px; display: flex; align-items: center; gap: 4px; padding-left: 14px; white-space: nowrap; }
.row.root { padding-left: 2px; }
.tree li { position: relative; }
.tree li::before { content: ""; position: absolute; left: 0; top: 0; bottom: 0; border-left: 1px dotted #a0a0a0; }
.tree li:last-child::before { bottom: auto; height: 8px; }
.tree li > .row::before { content: ""; position: absolute; left: 0; top: 8px; width: 13px; border-top: 1px dotted #a0a0a0; }
.ex { position: absolute; left: -4px; top: 4px; width: 9px; height: 9px; border: 1px solid #8c98a8; border-radius: 1px; background: linear-gradient(#2a4a9a, #2a4a9a) center / 5px 1px no-repeat, #f6f7fa; z-index: 1; }
.ex.plus { background: linear-gradient(#2a4a9a, #2a4a9a) center / 5px 1px no-repeat, linear-gradient(#2a4a9a, #2a4a9a) center / 1px 5px no-repeat, #f6f7fa; }

.tabs { height: 24px; flex: none; display: flex; align-items: flex-start; font: 11px/16px "Open Sans", sans-serif; }
.tabs button { height: 21px; display: flex; align-items: center; gap: 2px; padding: 0 2px 0 3px; margin-right: 1px; border: solid #666; border-width: 2px 2px 2px 1px; border-left-color: #fff; border-radius: 0 0 3px 3px; white-space: nowrap; }
.center .tabs button { gap: 4px; padding: 0 3px 0 4px; }
.tabs .sel, .center .tabs .sel { height: 23px; border-top-color: transparent; border-left: 0; padding-right: 6px; margin-right: 0; }
.tabs span { flex: 1; border-top: 2px solid #6a6a6a; }

.view { position: relative; flex: 1; min-height: 0; overflow: hidden; background: #fff; border: 2px solid #707070; border-right-color: #909090; border-bottom-color: #a8a8a8; }
.scene { position: absolute; left: 0; top: 0; }
.overlay { position: relative; height: 100%; padding: 5px 6px; display: flex; flex-direction: column; justify-content: space-between; color: #00007c; font: 21px/24px "Liberation Sans", sans-serif; }
.overlay p { margin: 0; }

.dialog { position: absolute; left: 532px; top: 176px; width: 879px; background: #f0f0f0; font: 9px/12px "Open Sans", sans-serif; }
.dtitle { height: 25px; display: flex; align-items: center; gap: 4px; padding: 0 6px 0 3px; background: linear-gradient(#dcdcdc, #fff 80%); }
.dtitle .ic { width: 15px; height: 15px; }
.dtitle span { flex: 1; }
.dtitle button svg { width: 10px; height: 10px; display: block; }
.dbody { display: flex; gap: 8px; padding: 7px 4px 4px 3px; }
.dleft { flex: 1; }
.plot { display: block; width: 100%; background: #fff; border: 1px solid #a0a0a0; }
.ax { font: 14px "Open Sans", sans-serif; fill: #333; }
.at { font: 13px "Open Sans", sans-serif; fill: #3f5f9f; }
.note { font: 24px "Liberation Sans", sans-serif; fill: #111; text-anchor: middle; }
.note.big { font-size: 28px; }
.checks { display: grid; grid-template-columns: 104px 123px 1fr; padding: 8px 0 1px; }
.checks label { display: flex; align-items: center; gap: 2px; }
.checks input { appearance: none; width: 12px; height: 12px; background: #fff; border: 1px solid #444; }
.dside { width: 87px; border-left: 1px solid #b8b8b8; padding: 1px 0 0 8px; display: flex; flex-direction: column; gap: 4px; }
.dside button { height: 19px; flex: none; background: #e1e1e1; border: 1px solid #b4b4b4; }
.dside button:disabled { background: #cacaca; color: #8c8c8c; }
.dside span { margin: 4px 0 -2px; }
.dside .first { margin-top: auto; }

.edit { background: #fff; }
.groups { flex: 1; min-height: 0; padding: 3px 0 0 2px; display: flex; flex-direction: column; gap: 2px; background: #fff; }
.grp { position: relative; border: 1px solid #c9cee0; border-right: 0; background: #fbfbfe; }
.grp h3 { position: relative; margin: 0; height: 18px; padding-left: 3px; font: 11px/18px Lato, sans-serif; color: #3f4a5c; background: linear-gradient(#eef0f7, #ccd1e0); }
.grp h3::after { content: ""; position: absolute; right: 5px; top: 7px; border: 4px solid transparent; border-top-color: #70757f; border-bottom: 0; }
.list button, .list label { position: relative; width: 100%; height: 19px; display: flex; align-items: center; gap: 5px; padding-left: 3px; }
.cur::after { content: ""; position: absolute; right: 5px; top: 5px; border: 4px solid transparent; border-right: 5px solid #10107c; border-left: 0; }
.list label { padding-left: 4px; gap: 6px; }
.list input { position: relative; appearance: none; width: 14px; height: 14px; background: #fff; border: 1px solid #3a5fa8; }
.list input:checked::after { content: ""; position: absolute; left: 4px; top: 1px; width: 4px; height: 8px; border: solid #158a1c; border-width: 0 2px 2px 0; transform: rotate(40deg); }
.sq { display: flex; gap: 4px; padding: 4px; }
.sq button { width: 22px; height: 22px; border: 1px solid #c8cde0; background: linear-gradient(#fbfcff, #dfe3ee); display: flex; align-items: center; justify-content: center; color: #1c6ec4; }
.sq.hot button, .sq.cold button { color: #111; font: 14px/16px "Open Sans", sans-serif; padding-bottom: 4px; background: linear-gradient(#f26a20, #f26a20) 50% 16px / 16px 3px no-repeat, #e9ebf3; }
.sq.cold button { background: linear-gradient(#6aace0, #6aace0) 50% 16px / 16px 3px no-repeat, #e9ebf3; }
.sq.cold .sel { border: 2px solid #0a78d8; background-position: 50% 15px, 0 0; }
.sq sub { font-size: 9px; line-height: 9px; margin-top: 5px; }
.pointer { position: absolute; left: 93px; top: -35px; width: 62px; height: 54px; }

.legend { padding: 5px 0 8px; line-height: 14px; }
.legend p { margin: 0 0 3px; padding-left: 52px; }
.scale { display: flex; padding-left: 53px; }
.cols { padding-top: 9px; }
.cols i { display: block; width: 40px; height: 12px; margin-bottom: 2px; border: 1px solid #c9cee0; }
.vals { width: 47px; text-align: right; }
.vals span { display: block; height: 14px; }
.c1 { background: #c00000; }
.c2 { background: #ff0000; }
.c3 { background: #ff8000; }
.c4 { background: #d0d000; }
.c5 { background: #ffff00; }
.c6 { background: #00ff00; }
.c7 { background: #00e68c; }
.c8 { background: #00f8f8; }
.c9 { background: #40b0ff; }
.c10 { background: #8080ff; }
.c11 { background: #0000e8; }
.legend dl { margin: 5px 0 0; display: grid; grid-template-columns: 92px 48px; line-height: 13px; text-align: right; }
.legend dd { margin: 0; }
.grey { background: #f0f0f0; }
.probe { padding: 7px 6px 7px; }
.selwrap { position: relative; }
.selwrap select { appearance: none; width: 182px; height: 21px; padding: 0 3px; background: #e3e3e3; border: 1px solid #a8a8a8; border-radius: 0; display: block; }
.selwrap svg { position: absolute; left: 167px; top: 8px; width: 10px; height: 6px; }
.pbtns { display: flex; gap: 4px; padding-top: 2px; }
.pbtns button { width: 21px; height: 19px; border: 1px solid #b4b4b4; background: #e4e4e4; display: flex; align-items: center; justify-content: center; }
.pbtns .ic { width: 14px; height: 14px; }

footer { height: 19px; flex: none; display: flex; align-items: stretch; border-top: 1px solid #d8d8d8; font: 11px/20px "Open Sans", sans-serif; }
footer .msg { flex: 1; border: 0; padding-left: 1px; }
footer span { padding: 0 6px; border-left: 1px solid #ccc; white-space: nowrap; }
footer .co { width: 76px; display: flex; justify-content: space-between; padding: 0 5px; }
footer .last { width: 65px; }
footer em { font-style: normal; }
```
